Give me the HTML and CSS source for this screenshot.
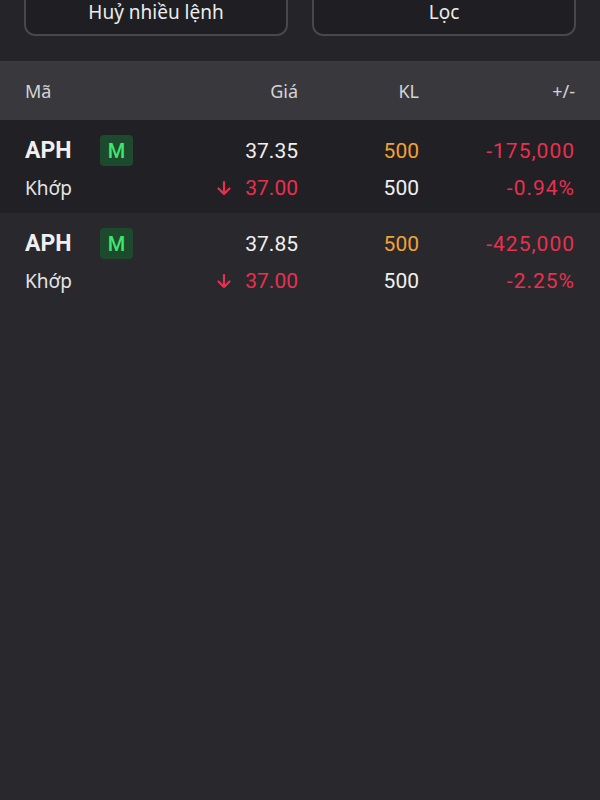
FILE: index.html
```html
<!DOCTYPE html>
<html lang="vi">
<head>
    <meta charset="UTF-8">
    <meta name="viewport" content="width=device-width, initial-scale=1.0">
    <title>Sổ lệnh</title>
    <link rel="stylesheet" href="styles.css">
</head>
<body>
    <div class="toolbar">
        <button class="tool-button">Huỷ nhiều lệnh</button>
        <button class="tool-button">Lọc</button>
    </div>

    <div class="table-head">
        <div class="col-code">Mã</div>
        <div class="col-num">Giá</div>
        <div class="col-num">KL</div>
        <div class="col-num">+/-</div>
    </div>

    <div class="order-row shaded">
        <div class="col-code">
            <span class="ticker">APH</span>
            <span class="badge">M</span>
        </div>
        <div class="col-num">37.35</div>
        <div class="col-num orange">500</div>
        <div class="col-num red change">-175,000</div>

        <div class="col-code status">Khớp</div>
        <div class="col-num red">
            <svg class="arrow" viewBox="0 0 16 16"><path d="M8 2v12M2.5 8.5L8 14l5.5-5.5" fill="none" stroke="currentColor" stroke-width="2.2" stroke-linecap="round" stroke-linejoin="round"/></svg>
            37.00
        </div>
        <div class="col-num">500</div>
        <div class="col-num red change">-0.94%</div>
    </div>

    <div class="order-row">
        <div class="col-code">
            <span class="ticker">APH</span>
            <span class="badge">M</span>
        </div>
        <div class="col-num">37.85</div>
        <div class="col-num orange">500</div>
        <div class="col-num red change">-425,000</div>

        <div class="col-code status">Khớp</div>
        <div class="col-num red">
            <svg class="arrow" viewBox="0 0 16 16"><path d="M8 2v12M2.5 8.5L8 14l5.5-5.5" fill="none" stroke="currentColor" stroke-width="2.2" stroke-linecap="round" stroke-linejoin="round"/></svg>
            37.00
        </div>
        <div class="col-num">500</div>
        <div class="col-num red change">-2.25%</div>
    </div>
</body>
</html>
```

FILE: styles.css
```css
* {
    margin: 0;
    padding: 0;
    box-sizing: border-box;
}

body {
    background: #29282d;
    color: #f2f2f2;
    font-family: "Noto Sans", Arial, sans-serif;
    width: 600px;
    height: 800px;
    overflow: hidden;
}

.toolbar {
    display: flex;
    gap: 24px;
    padding: 0 24px 25px;
    margin-top: -14px;
    background: #252428;
}

.tool-button {
    flex: 1;
    height: 50px;
    padding-top: 2px;
    background: #1f1e22;
    border: 2px solid #48474c;
    border-radius: 11px;
    color: #ececec;
    font-family: "Noto Sans", Arial, sans-serif;
    font-size: 19px;
    line-height: 1;
}

.table-head,
.order-row {
    display: grid;
    grid-template-columns: 1fr 120px 121px 156px;
    padding: 0 25px;
    align-items: center;
}

.table-head {
    height: 59px;
    background: #39393d;
    color: #d4d4d6;
    font-size: 18px;
}

.order-row {
    height: 93px;
    padding-top: 12px;
    padding-bottom: 7px;
    grid-auto-rows: 37px;
    font-family: Roboto, Arial, sans-serif;
    font-size: 21px;
    color: #f0f0f0;
}

.order-row.shaded {
    background: #212024;
}

.col-num {
    text-align: right;
    display: flex;
    justify-content: flex-end;
    align-items: center;
}

.col-code {
    display: flex;
    align-items: center;
}

.ticker {
    font-weight: bold;
    font-size: 23px;
    width: 75px;
}

.badge {
    width: 33px;
    height: 31px;
    border-radius: 4px;
    background: #1d4a2c;
    color: #3ee66f;
    font-weight: 500;
    font-size: 20px;
    display: flex;
    align-items: center;
    justify-content: center;
}

.status {
    color: #e4e4e4;
    font-family: "Noto Sans", Arial, sans-serif;
    font-size: 19px;
}

.arrow {
    width: 16px;
    height: 16px;
    margin-right: 13px;
}

.change {
    letter-spacing: 1px;
}

.orange {
    color: #f2a233;
}

.red {
    color: #e8304f;
}
```
